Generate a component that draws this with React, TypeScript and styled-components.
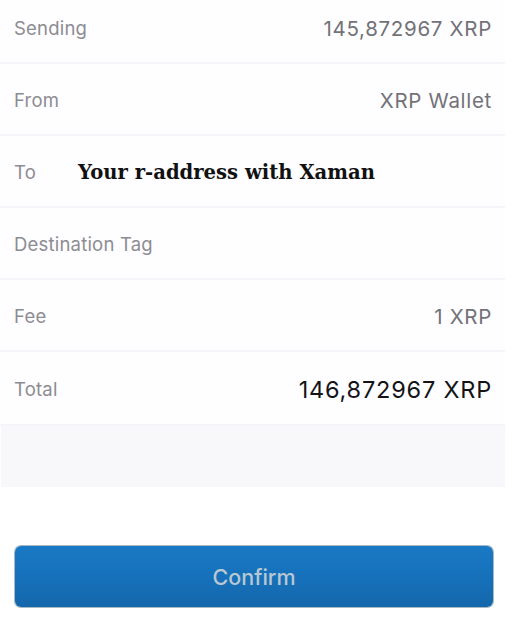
import styled, { createGlobalStyle } from 'styled-components';

const GlobalStyle = createGlobalStyle`
  html, body {
    margin: 0;
    padding: 0;
    background: #ffffff;
  }
  body {
    font-family: Inter, "Liberation Sans", Arial, sans-serif;
    -webkit-font-smoothing: antialiased;
  }
`;

type Item = {
  label: string;
  value?: string;
  strong?: boolean;
  address?: boolean;
};

const items: Item[] = [
  { label: 'Sending', value: '145,872967 XRP' },
  { label: 'From', value: 'XRP Wallet' },
  { label: 'To', value: 'Your r-address with Xaman', address: true },
  { label: 'Destination Tag' },
  { label: 'Fee', value: '1 XRP' },
  { label: 'Total', value: '146,872967 XRP', strong: true },
];

export default function App() {
  return (
    <>
      <GlobalStyle />
      <Page>
        <List>
          {items.map((item, i) => (
            <Row key={item.label} $last={i === items.length - 1}>
              <Label>{item.label}</Label>
              {item.address ? (
                <Address>{item.value}</Address>
              ) : (
                <Value $strong={item.strong}>{item.value}</Value>
              )}
            </Row>
          ))}
        </List>
        <Filler />
        <Footer>
          <ConfirmButton>Confirm</ConfirmButton>
        </Footer>
      </Page>
    </>
  );
}

const Page = styled.div`
  width: 516px;
  height: 627px;
  display: flex;
  flex-direction: column;
  overflow: hidden;
`;

const List = styled.div`
  width: 505px;
  margin-top: -8px;
  display: flex;
  flex-direction: column;
`;

const Row = styled.div<{ $last?: boolean }>`
  box-sizing: border-box;
  height: ${(p) => (p.$last ? 74 : 72)}px;
  padding: 2px 13px 0 14px;
  display: flex;
  align-items: center;
  background: #fefdff;
  border-bottom: 2px solid #f5f4f8;
`;

const Label = styled.div`
  font-size: 18.5px;
  letter-spacing: 0.2px;
  color: #8c8c91;
  white-space: nowrap;
  flex: 0 0 auto;
`;

const Value = styled.div<{ $strong?: boolean }>`
  margin-left: auto;
  font-size: ${(p) => (p.$strong ? 23.5 : 20.5)}px;
  letter-spacing: ${(p) => (p.$strong ? 0.8 : 0.7)}px;
  color: ${(p) => (p.$strong ? '#141416' : '#727277')};
  white-space: nowrap;
`;

const Address = styled.div`
  margin-left: 42px;
  font-family: "DejaVu Serif", "Liberation Serif", serif;
  font-weight: bold;
  font-size: 19.6px;
  color: #111111;
  white-space: nowrap;
`;

const Filler = styled.div`
  width: 504px;
  height: 61px;
  margin-left: 1px;
  background: #f8f8fa;
`;

const Footer = styled.div`
  padding: 59px 23px 0 15px;
`;

const ConfirmButton = styled.button`
  width: 100%;
  height: 61px;
  border: none;
  border-radius: 6px;
  background: linear-gradient(180deg, #1a79c5 0%, #1670b9 55%, #1467ab 100%);
  box-shadow: 0 0 0 1px #a9b9c4;
  color: #b9c8d3;
  font-family: Inter, "Liberation Sans", Arial, sans-serif;
  font-size: 21.5px;
  font-weight: 500;
  cursor: pointer;
`;
